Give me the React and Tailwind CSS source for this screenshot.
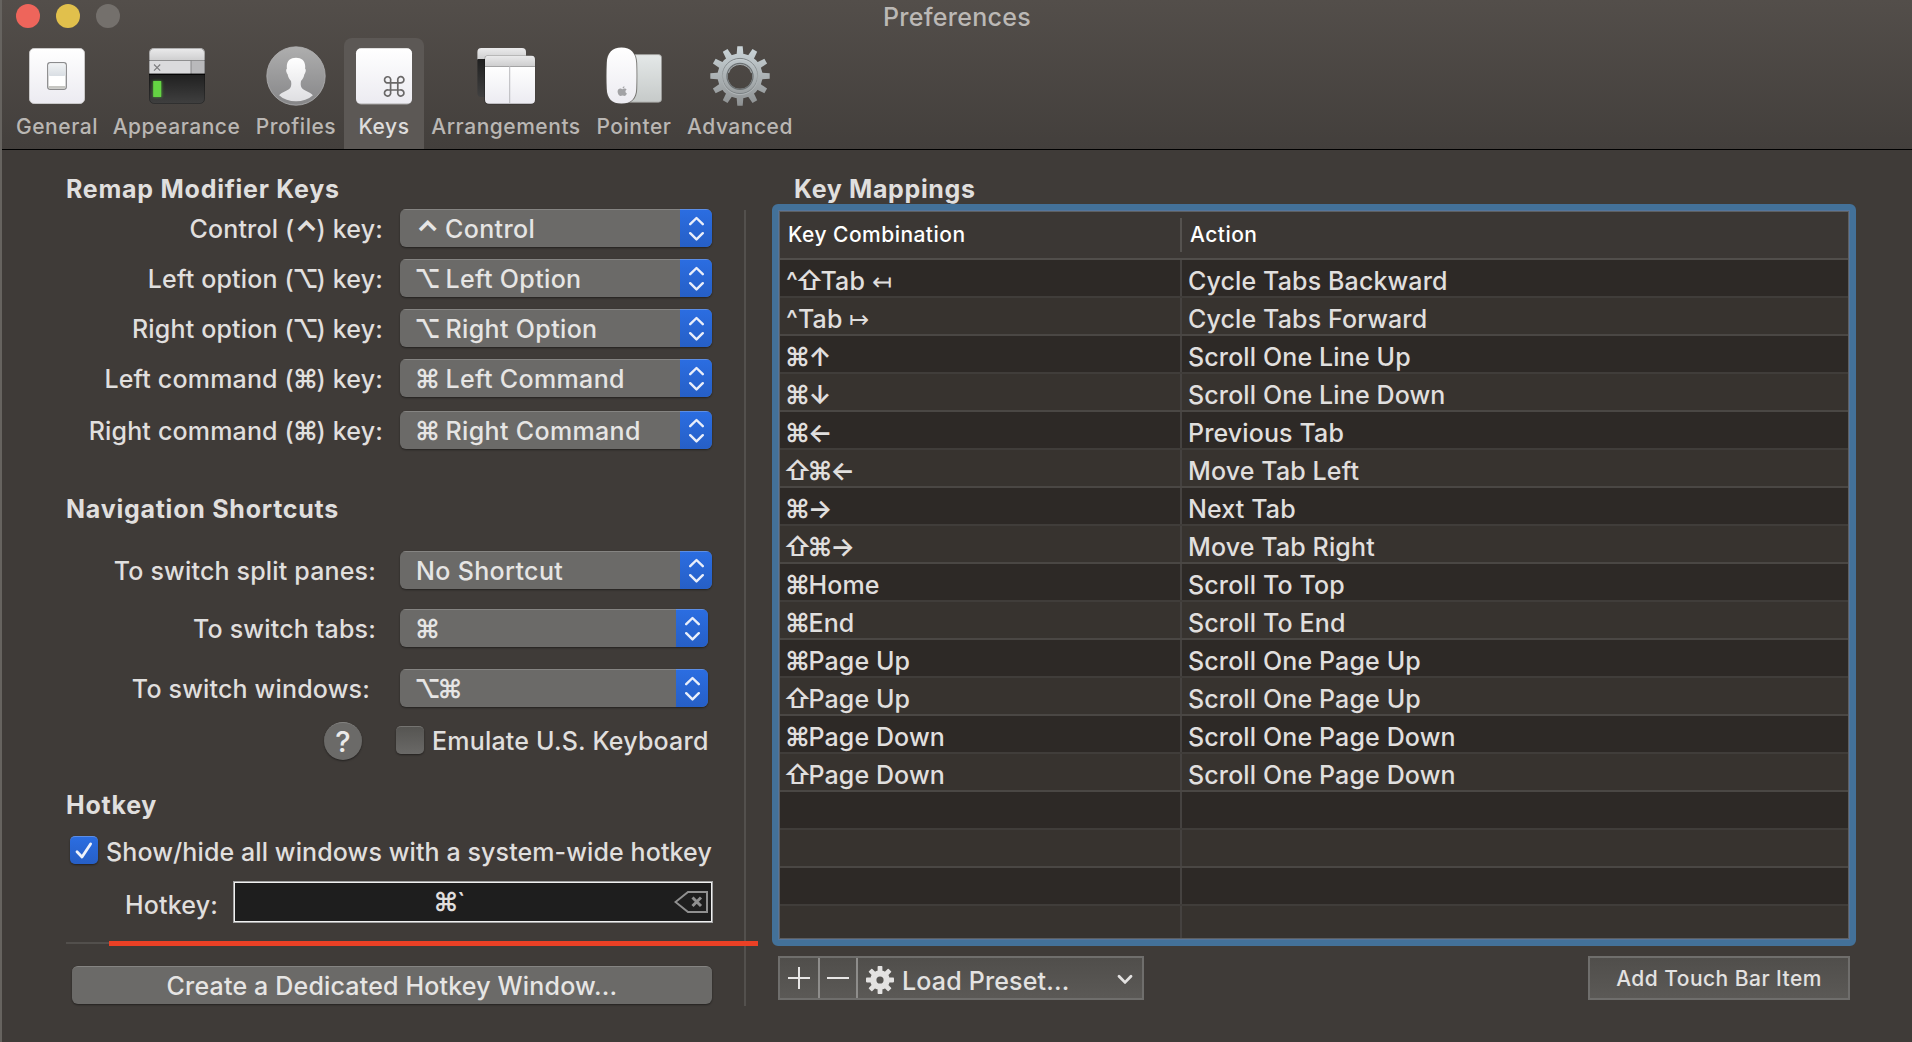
import React from "react";

/* ---------- toolbar icons (60 x 60 slots) ---------- */

function GeneralIcon() {
  return (
    <svg width="60" height="60" viewBox="0 0 60 60">
      <defs>
        <linearGradient id="gen" x1="0" y1="0" x2="0" y2="1">
          <stop offset="0" stopColor="#ffffff" />
          <stop offset="1" stopColor="#ecebf1" />
        </linearGradient>
        <linearGradient id="genTop" x1="0" y1="0" x2="0" y2="1">
          <stop offset="0" stopColor="#f1f3f5" />
          <stop offset="1" stopColor="#d9dee3" />
        </linearGradient>
      </defs>
      <rect x="2.5" y="2.5" width="55" height="55" rx="4.6" fill="url(#gen)" stroke="#c9c8c8" strokeWidth="1" />
      <rect x="20.7" y="16.7" width="18.6" height="26.6" rx="2.5" fill="#fff" stroke="#8b8b8d" strokeWidth="1.3" />
      <rect x="21.4" y="17.4" width="17.2" height="12.6" rx="1.8" fill="url(#genTop)" />
      <path d="M21.4 40H38.6V41Q38.6 42.7 37 42.7H23Q21.4 42.7 21.4 41Z" fill="#c6c6c2" />
    </svg>
  );
}

function AppearanceIcon() {
  return (
    <svg width="60" height="60" viewBox="0 0 60 60">
      <defs>
        <linearGradient id="apTop" x1="0" y1="0" x2="0" y2="1">
          <stop offset="0" stopColor="#ebebec" />
          <stop offset="1" stopColor="#cdcdce" />
        </linearGradient>
        <linearGradient id="apTerm" x1="0" y1="0" x2="0" y2="1">
          <stop offset="0" stopColor="#202020" />
          <stop offset="1" stopColor="#404040" />
        </linearGradient>
        <clipPath id="apClip"><rect x="2" y="2" width="56" height="56" rx="5" /></clipPath>
        <filter id="glow" x="-50%" y="-50%" width="200%" height="200%"><feGaussianBlur stdDeviation="1.4" /></filter>
      </defs>
      <g clipPath="url(#apClip)">
        <rect x="2" y="2" width="56" height="13" fill="url(#apTop)" />
        <rect x="2" y="14" width="56" height="1" fill="#8f8f90" />
        <rect x="2" y="15" width="42" height="13" fill="#dbdbdd" />
        <rect x="44" y="15" width="14" height="13" fill="#b9b9bb" />
        <rect x="43.5" y="14" width="1" height="14" fill="#858587" />
        <rect x="2" y="28" width="56" height="30" fill="url(#apTerm)" />
        <rect x="2" y="27.6" width="56" height="1.2" fill="#000" />
      </g>
      <rect x="2.5" y="2.5" width="55" height="55" rx="4.6" fill="none" stroke="#000" strokeOpacity="0.25" />
      <path d="M7 18.5L13.2 24.7M13.2 18.5L7 24.7" stroke="#7b7b7d" strokeWidth="1.1" />
      <rect x="6" y="35" width="8.6" height="16" fill="#5bd63c" filter="url(#glow)" opacity="0.6" />
      <rect x="6.2" y="35" width="8" height="16" fill="#64d443" />
    </svg>
  );
}

function ProfilesIcon() {
  return (
    <svg width="60" height="60" viewBox="0 0 60 60">
      <defs>
        <linearGradient id="prBg" x1="0" y1="0" x2="0" y2="1">
          <stop offset="0" stopColor="#aeaeae" />
          <stop offset="1" stopColor="#868688" />
        </linearGradient>
        <linearGradient id="prFg" x1="0" y1="0" x2="0" y2="1">
          <stop offset="0" stopColor="#ffffff" />
          <stop offset="1" stopColor="#dfdfe2" />
        </linearGradient>
      </defs>
      <circle cx="30" cy="30" r="29.2" fill="url(#prBg)" stroke="#b0b0b1" strokeWidth="0.8" />
      <path
        d="M30 11.7C35.5 11.7 39 14.6 39.2 20C39.3 21 39.1 22 39.1 22.8C40.2 23 40 26.5 38.4 28.2C37.9 31 36.8 33 35 35C34.4 38 34.6 40.5 36 42.3C38.8 45 43.5 45.8 46.9 49.2C42.5 53.2 36.5 55.2 30 55.2C23.5 55.2 17.5 53.2 13.1 49.2C16.5 45.8 21.2 45 24 42.3C25.4 40.5 25.6 38 25 35C23.2 33 22.1 31 21.6 28.2C20 26.5 19.8 23 20.9 22.8C20.9 22 20.7 21 20.8 20C21 14.6 24.5 11.7 30 11.7Z"
        fill="url(#prFg)"
      />
    </svg>
  );
}

function KeysIcon() {
  return (
    <svg width="60" height="60" viewBox="0 0 60 60">
      <rect x="2" y="2.6" width="56" height="55.8" rx="5" fill="#a9a8a8" />
      <rect x="2" y="2.2" width="56" height="55.4" rx="5" fill="url(#gen)" />
      <path
        d="M36.6 36.8H43.8V44H36.6ZM36.6 36.8H34.6A3.1 3.1 0 1 1 36.6 34.8ZM43.8 36.8V34.5A3.1 3.1 0 1 1 46.1 36.8ZM43.8 44H46.1A3.1 3.1 0 1 1 43.8 46.3ZM36.6 44V46.3A3.1 3.1 0 1 1 34.3 44Z"
        fill="none"
        stroke="#6a6868"
        strokeWidth="1.7"
      />
    </svg>
  );
}

function ArrangementsIcon() {
  return (
    <svg width="60" height="60" viewBox="0 0 60 60">
      <defs>
        <clipPath id="arBack"><rect x="1.4" y="2" width="48.6" height="49" rx="4" /></clipPath>
        <clipPath id="arFront"><rect x="9" y="9.6" width="50" height="48.2" rx="4" /></clipPath>
      </defs>
      <g clipPath="url(#arBack)">
        <rect x="1" y="2" width="49" height="12" fill="url(#apTop)" />
        <rect x="1" y="13" width="49" height="38" fill="url(#apTerm)" />
      </g>
      <rect x="8.2" y="9" width="51" height="49.6" rx="4.4" fill="#000" opacity="0.25" />
      <g clipPath="url(#arFront)">
        <rect x="9" y="9.4" width="50" height="11" fill="url(#apTop)" />
        <rect x="9" y="20" width="50" height="38" fill="url(#gen)" />
        <rect x="9" y="20" width="50" height="1" fill="#a3a3a4" />
        <rect x="33.2" y="20" width="1" height="38" fill="#b9b9bc" />
      </g>
    </svg>
  );
}

function PointerIcon() {
  return (
    <svg width="60" height="60" viewBox="0 0 60 60">
      <defs>
        <linearGradient id="pad" x1="0" y1="0" x2="0" y2="1">
          <stop offset="0" stopColor="#e4e8e8" />
          <stop offset="1" stopColor="#c6cac9" />
        </linearGradient>
      </defs>
      <rect x="20" y="8.6" width="37.5" height="47.6" rx="3" fill="url(#pad)" stroke="#9d9d9b" strokeWidth="0.8" />
      <path
        d="M17.5 1.8C27.5 1.8 33 7 33.2 17C33.5 26 33.5 34 33.2 43C33 53 27.5 58.2 17.5 58.2C7.5 58.2 2 53 1.8 43C1.5 34 1.5 26 1.8 17C2 7 7.5 1.8 17.5 1.8Z"
        fill="#55524f"
        opacity="0.7"
      />
      <path
        d="M17.5 1.6C27 1.6 31.8 7 32.2 17C32.6 26 32.6 34 32.2 43C31.8 52.6 27 57.6 17.5 57.6C8 57.6 3.2 52.6 2.8 43C2.4 34 2.4 26 2.8 17C3.2 7 8 1.6 17.5 1.6Z"
        fill="url(#gen)"
      />
      <path
        d="M18.6 41.7C18.8 40.9 19.6 40.4 20.6 40.5C20.6 41.500 19.700 42.300 18.600 42.300ZM18.300 43.300C19 43.300 19.800 42.600 20.800 42.600C21.600 42.600 22.200 43 22.600 43.500C20.900 44.500 21.100 46.800 22.900 47.600C22.300 49 21.400 50 20.600 50C19.800 50 19.400 49.600 18.500 49.600C17.600 49.600 17.200 50 16.400 50C14.900 50 13.600 47.500 13.600 45.500C13.600 43.700 14.900 42.600 16.300 42.600C17.100 42.600 17.800 43.300 18.300 43.300Z"
        fill="#a2a2a5"
      />
    </svg>
  );
}

const TWELVE = [0, 30, 60, 90, 120, 150, 180, 210, 240, 270, 300, 330];
const EIGHT = [0, 45, 90, 135, 180, 225, 270, 315];

function AdvancedIcon() {
  return (
    <svg width="60" height="60" viewBox="0 0 60 60">
      <defs>
        <linearGradient id="adv" gradientUnits="userSpaceOnUse" x1="0" y1="0" x2="0" y2="60">
          <stop offset="0" stopColor="#cbd5d9" />
          <stop offset="1" stopColor="#8d9091" />
        </linearGradient>
        <mask id="advMask">
          <g fill="#fff">
            {TWELVE.map((a) => (
              <path key={a} d="M26.5 10L27.3 0.3H32.7L33.5 10Z" transform={`rotate(${a} 30 30)`} />
            ))}
            <circle cx="30" cy="30" r="22.5" />
          </g>
          <circle cx="30" cy="30.5" r="12.2" fill="#000" />
        </mask>
      </defs>
      <rect width="60" height="60" fill="url(#adv)" mask="url(#advMask)" />
      <circle cx="30" cy="30" r="17.6" fill="none" stroke="#7c8284" strokeWidth="1" />
      <circle cx="30" cy="31" r="17.6" fill="none" stroke="#d4dadc" strokeOpacity="0.5" strokeWidth="0.8" />
      <circle cx="30" cy="30.3" r="13" fill="none" stroke="#6b7072" strokeWidth="1.2" />
      <path d="M18.5 27A12 12 0 0 1 41.5 27" fill="none" stroke="#a3a8aa" strokeWidth="1" />
    </svg>
  );
}

function SmallGear() {
  return (
    <svg width="28" height="28" viewBox="0 0 28 28">
      <mask id="smallGear">
        <g fill="#fff">
          {EIGHT.map((a) => (
            <rect key={a} x="11.6" y="0" width="4.8" height="8" rx="0.8" transform={`rotate(${a} 14 14)`} />
          ))}
          <circle cx="14" cy="14" r="9.8" />
        </g>
        <circle cx="14" cy="14" r="3.6" fill="#000" />
      </mask>
      <rect width="28" height="28" fill="#e3e2e1" mask="url(#smallGear)" />
    </svg>
  );
}

const TOOLS = [
  { name: "General", icon: GeneralIcon, width: "w-[96px]" },
  { name: "Appearance", icon: AppearanceIcon, width: "w-[143px]" },
  { name: "Profiles", icon: ProfilesIcon, width: "w-[96px]" },
  { name: "Keys", icon: KeysIcon, width: "w-[80px]", active: true },
  { name: "Arrangements", icon: ArrangementsIcon, width: "w-[164px]" },
  { name: "Pointer", icon: PointerIcon, width: "w-[92px]" },
  { name: "Advanced", icon: AdvancedIcon, width: "w-[120px]" },
];

function Header() {
  return (
    <header className="flex h-[150px] flex-col border-b border-black bg-linear-to-b from-[#534e4a] to-[#433f3c]">
      <div className="grid h-[38px] grid-cols-[1fr_auto_1fr] items-start">
        <div className="flex gap-4 pt-1 pl-4">
          <span className="size-6 rounded-full bg-[#ee655b]" />
          <span className="size-6 rounded-full bg-[#e1c04c]" />
          <span className="size-6 rounded-full bg-[#74706c]" />
        </div>
        <h1 className="pl-0.5 text-[25px] leading-[34px] tracking-[0.012em] text-[#bbb8b5]">Preferences</h1>
      </div>
      <nav className="flex flex-1 pl-[9px]">
        {TOOLS.map(({ name, icon: Icon, width, active }) => (
          <div
            key={name}
            className={`flex flex-col items-center pt-2 ${width} ${
              active ? "rounded-t-lg bg-[#5c5855] text-[#dedddc]" : "text-[#bab7b4]"
            }`}
          >
            <Icon />
            <span className="mt-2 text-[21px] leading-[26px] tracking-[0.025em] whitespace-nowrap">{name}</span>
          </div>
        ))}
      </nav>
    </header>
  );
}

/* ---------- key symbols ---------- */

function Sym({ c }) {
  if (c === "^") return <span className="inline-block w-[12px] text-center">^</span>;
  if (c === "⌃")
    return (
      <span className="inline-block w-[22px] translate-y-[3px] text-[29px] leading-[20px] font-bold tracking-[-0.060em]">
        ⌃
      </span>
    );
  if (c === "↤" || c === "↦") return <span className="text-[24px] leading-[20px]">{c}</span>;
  return (
    <span className="-ml-px mr-px inline-flex w-[22.500px] justify-center text-[26px] leading-[20px] font-semibold tracking-[-0.100em]">
      {c}
    </span>
  );
}

const SYMBOL = /([⌘⌥⇧^⌃↑↓←→↤↦])/;

function Keyed({ children }) {
  return children
    .split(SYMBOL)
    .filter(Boolean)
    .map((part, i) => (SYMBOL.test(part) ? <Sym key={i} c={part} /> : <span key={i}>{part}</span>));
}

/* ---------- left column ---------- */

function Heading({ className, children }) {
  return (
    <h2 className={`pl-[66px] text-[25px] leading-[30px] font-bold tracking-[0.030em] ${className}`}>{children}</h2>
  );
}

function Popup({ className, children }) {
  return (
    <div className={`flex h-[38px] overflow-hidden rounded-md bg-[#6b6a68] shadow-[0_1px_2px_rgba(0,0,0,0.45)] ${className}`}>
      <div className="flex-1 border-t border-[#858482] pl-4 leading-[38px] tracking-[0.014em] whitespace-pre text-[#e6e5e4]">
        <Keyed>{children}</Keyed>
      </div>
      <div className="flex w-8 items-center justify-center border-t border-[#5c8ee6] bg-linear-to-b from-[#2b6de1] to-[#265fc6]">
        <svg width="16" height="26" viewBox="0 0 16 26" fill="none" stroke="#e9eefa" strokeWidth="2.4" strokeLinecap="round" strokeLinejoin="round">
          <path d="M2.2 8.200L8.500 2L14.800 8.200M2.200 17.200L8.500 23.400L14.800 17.200" />
        </svg>
      </div>
    </div>
  );
}

function Field({ label, labelWidth = "w-[383px]", gap = "pl-[17px]", value, width = "w-[312px]", className }) {
  return (
    <div className={`flex h-[38px] items-start ${className}`}>
      <div className={`shrink-0 text-right leading-[40px] whitespace-nowrap ${labelWidth}`}>
        <Keyed>{label}</Keyed>
      </div>
      <div className={gap}>
        <Popup className={width}>{value}</Popup>
      </div>
    </div>
  );
}

function LeftColumn() {
  return (
    <section className="flex w-[744px] shrink-0 flex-col pt-6">
      <Heading>Remap Modifier Keys</Heading>
      <Field className="mt-[5px]" label="Control (⌃) key:" value="⌃ Control" />
      <Field className="mt-3" label="Left option (⌥) key:" value="⌥ Left Option" />
      <Field className="mt-3" label="Right option (⌥) key:" value="⌥ Right Option" />
      <Field className="mt-3" label="Left command (⌘) key:" value="⌘ Left Command" />
      <Field className="mt-[14px]" label="Right command (⌘) key:" value="⌘ Right Command" />

      <Heading className="mt-[45px]">Navigation Shortcuts</Heading>
      <Field className="mt-[27px]" label="To switch split panes:" labelWidth="w-[376px]" gap="pl-6" value="No Shortcut" />
      <Field className="mt-5" label="To switch tabs:" labelWidth="w-[376px]" gap="pl-6" value="⌘" width="w-[308px]" />
      <Field className="mt-[22px]" label="To switch windows:" labelWidth="w-[370px]" gap="pl-[30px]" value="⌥⌘" width="w-[308px]" />

      <div className="mt-[15px] flex h-[38px] items-start pl-[324px]">
        <span className="flex size-[38px] items-center justify-center rounded-full border-t border-[#858482] bg-[#6b6a68] text-[29px] leading-none tracking-normal text-[#ecebea] shadow-[0_1px_2px_rgba(0,0,0,0.45)]">
          ?
        </span>
        <span className="mt-1 ml-[34px] size-7 rounded-[5px] border-t border-[#757471] bg-linear-to-b from-[#565552] to-[#6a6967] shadow-[0_1px_2px_rgba(0,0,0,0.45)]" />
        <span className="ml-2 leading-[39px] tracking-[0.008em]">Emulate U.S. Keyboard</span>
      </div>

      <Heading className="mt-[30px]">Hotkey</Heading>
      <div className="mt-4 flex h-7 items-start pl-[70px]">
        <span className="flex size-7 items-center justify-center rounded-[5px] border-t border-[#5c8ee6] bg-linear-to-b from-[#2b6de1] to-[#265fc6] shadow-[0_1px_2px_rgba(0,0,0,0.45)]">
          <svg width="20" height="18" viewBox="0 0 20 18" fill="none" stroke="#eef2fb" strokeWidth="2.8" strokeLinecap="round" strokeLinejoin="round">
            <path d="M3 9.8L8 15L16.6 2" />
          </svg>
        </span>
        <span className="ml-2 leading-[32px] tracking-[0.004em] whitespace-nowrap">
          Show/hide all windows with a system-wide hotkey
        </span>
      </div>
      <div className="mt-[17px] flex h-[42px] items-start">
        <span className="w-[218px] text-right leading-[48px]">Hotkey:</span>
        <div className="ml-[15px] flex h-[42px] w-[480px] items-center border border-[#a3a3a3] bg-[#1e1e1e] pr-1 shadow-[inset_0_0_0_1px_#f0f0f0]">
          <span className="flex-1 pr-2 text-center leading-[42px]">
            <Keyed>⌘`</Keyed>
          </span>
          <svg width="34" height="22" viewBox="0 0 34 22" fill="none" stroke="#8f8f8f" strokeWidth="2">
            <path d="M14 1H33V21H14L1.5 11Z" />
            <path d="M18.5 6.5L27 15M27 6.5L18.5 15" strokeWidth="3" />
          </svg>
        </div>
      </div>
      <div className="relative mt-[19px] ml-[66px] h-0.5 w-[646px] bg-[#524f4c]">
        <div className="absolute -top-px left-[43px] z-10 h-[5px] w-[649px] bg-[#ea4025]" />
      </div>
      <button className="mt-[22px] ml-[72px] h-[38px] w-[640px] rounded-md border-t border-[#858482] bg-[#6b6a68] text-center leading-[38px] tracking-[0.007em] text-[#e6e5e4] shadow-[0_1px_2px_rgba(0,0,0,0.45)]">
        Create a Dedicated Hotkey Window...
      </button>
    </section>
  );
}

/* ---------- right column ---------- */

const MAPPINGS = [
  ["^⇧Tab ↤", "Cycle Tabs Backward"],
  ["^Tab ↦", "Cycle Tabs Forward"],
  ["⌘↑", "Scroll One Line Up"],
  ["⌘↓", "Scroll One Line Down"],
  ["⌘←", "Previous Tab"],
  ["⇧⌘←", "Move Tab Left"],
  ["⌘→", "Next Tab"],
  ["⇧⌘→", "Move Tab Right"],
  ["⌘Home", "Scroll To Top"],
  ["⌘End", "Scroll To End"],
  ["⌘Page Up", "Scroll One Page Up"],
  ["⇧Page Up", "Scroll One Page Up"],
  ["⌘Page Down", "Scroll One Page Down"],
  ["⇧Page Down", "Scroll One Page Down"],
  ["", ""],
  ["", ""],
  ["", ""],
  ["", ""],
];

function RightColumn() {
  return (
    <section className="flex w-[1084px] flex-col pt-6">
      <h2 className="pl-[22px] text-[25px] leading-[30px] font-bold tracking-[0.026em]">Key Mappings</h2>
      <div className="h-[742px] rounded-md border-[6px] border-[#437199] bg-[#55759a]">
        <div className="m-px h-[728px] overflow-hidden border border-[#5d5f61] bg-[#3b3734]">
          <div className="flex h-12 items-start border-b-2 border-[#514e4b] text-[21px] leading-[46px] font-medium tracking-[0.022em] text-white">
            <span className="w-[400px] pl-[8px]">Key Combination</span>
            <span className="mt-1.5 h-[34px] border-l-2 border-[#55524f] pl-2 leading-[34px]">Action</span>
          </div>
          {MAPPINGS.map(([keys, action], i) => (
            <div
              key={i}
              className={`flex h-[38px] border-b-2 leading-[42px] whitespace-pre ${
                i % 2 ? "border-[#4a4744] bg-[#37332f]" : "border-[#403d3a] bg-[#2d2926]"
              }`}
            >
              <span className="w-[400px] pl-[6px] tracking-[0.004em]">
                <Keyed>{keys}</Keyed>
              </span>
              <span className="border-l-2 border-[#454240] pl-[6px] tracking-[0.005em]">{action}</span>
            </div>
          ))}
        </div>
      </div>
      <div className="mt-[10px] flex items-start justify-between px-[6px]">
        <div className="flex h-11 w-[366px] border-2 border-[#6f6e6c] bg-linear-to-b from-[#504e4b] to-[#5b5956]">
          <span className="flex w-[38px] items-center justify-center">
            <svg width="22" height="22" viewBox="0 0 22 22" fill="#e8e7e6">
              <path d="M10 0H12V10H22V12H12V22H10V12H0V10H10Z" />
            </svg>
          </span>
          <span className="flex w-[38px] items-center justify-center border-l-2 border-[#8e8d8b]">
            <span className="h-0.5 w-[22px] bg-[#e8e7e6]" />
          </span>
          <span className="flex flex-1 items-start border-l-2 border-[#8e8d8b] pl-2">
            <span className="mt-2">
              <SmallGear />
            </span>
            <span className="ml-2 leading-[46px] text-[#e3e2e1]">Load Preset...</span>
            <svg className="mt-[16px] mr-[9px] ml-auto" width="16" height="11" viewBox="0 0 16 11" fill="none" stroke="#e3e2e1" strokeWidth="2.8" strokeLinecap="round" strokeLinejoin="round">
              <path d="M2 2.2L8 8.4L14 2.2" />
            </svg>
          </span>
        </div>
        <button className="h-11 w-[262px] border-2 border-[#6f6e6c] bg-linear-to-b from-[#504e4b] to-[#5b5956] text-[21px] leading-[42px] font-medium tracking-[0.022em] text-[#e3e2e1]">
          Add Touch Bar Item
        </button>
      </div>
    </section>
  );
}

export default function App() {
  return (
    <div className="relative flex h-[1042px] w-[1912px] flex-col overflow-hidden bg-[#3f3b38] font-['Inter','Liberation_Sans',sans-serif] text-[25px] font-[450] tracking-[0.007em] text-[#e0dfde]">
      <Header />
      <main className="flex flex-1 items-start">
        <LeftColumn />
        <div className="mt-[60px] h-[796px] w-0.5 shrink-0 bg-[#53504d]" />
        <div className="ml-[26px]">
          <RightColumn />
        </div>
      </main>
      <div className="absolute inset-y-0 left-0 w-0.5 bg-[#66635f]" />
    </div>
  );
}
